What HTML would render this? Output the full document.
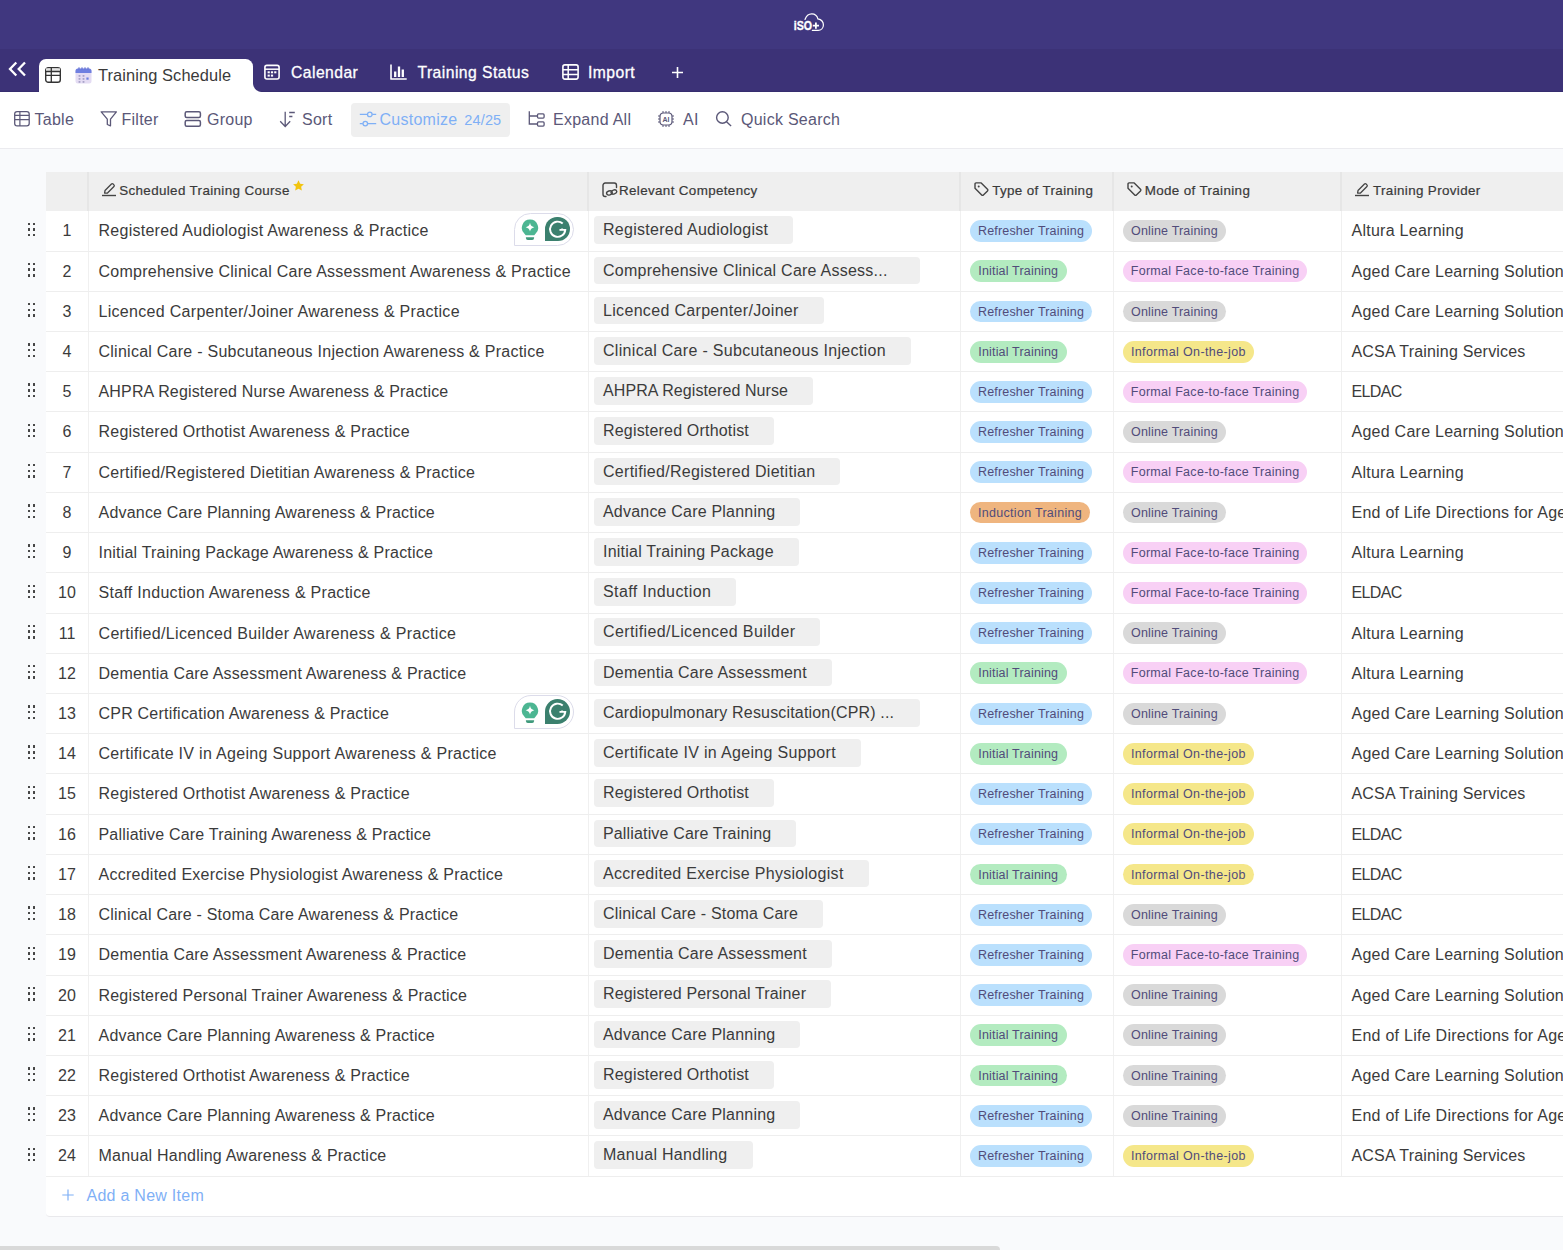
<!DOCTYPE html>
<html lang="en"><head><meta charset="utf-8"><title>Training Schedule</title>
<style>
*{box-sizing:border-box}
html,body{margin:0;padding:0}
body{width:1563px;height:1250px;overflow:hidden;background:#f9fafc;font-family:"Liberation Sans",Arial,sans-serif;font-size:16px;letter-spacing:.26px;color:#3b3b3b;position:relative}
.abs{position:absolute}
.topbar{position:absolute;left:0;top:0;width:1563px;height:49px;background:#40377f}
.tabbar{position:absolute;left:0;top:49px;width:1563px;height:43px;background:#3c3277;border-bottom:1px solid #362d6f}
.toolbar{position:absolute;left:0;top:92px;width:1563px;height:57px;background:#fff;border-bottom:1px solid #ebebef}
.tab-active{position:absolute;left:39px;top:59px;width:214px;height:33px;background:#fff;border-radius:7px 7.500px 0 0}
.tab-active:after{content:"";position:absolute;right:-9px;bottom:0;width:9px;height:9px;background:radial-gradient(circle at 100% 0,rgba(255,255,255,0) 8.5px,#fff 9.5px)}
.tt{position:absolute;white-space:nowrap;line-height:20px}
.wt{color:#fff;-webkit-text-stroke:.3px #fff;letter-spacing:.45px}
.tool{color:#5b5878}
.blue{color:#7fb0f6}
.custom{position:absolute;left:351px;top:103px;width:159px;height:34px;background:#efefef;border-radius:4px}
svg{display:block}
.ic{position:absolute}
/* table */
.thead{position:absolute;left:46px;top:171.500px;width:1530px;height:39.300px;background:#efefef}
.thead .sep{position:absolute;top:0;width:2px;height:39.300px;background:#e6e6e6;margin-left:-.5px}
.th{position:absolute;top:0;height:39.300px;line-height:38px;font-size:13.400px;letter-spacing:.36px;color:#3a3a3a;-webkit-text-stroke:.2px #3a3a3a;white-space:nowrap}
.tbody{position:absolute;left:0;top:211.400px;width:1600px}
.row{position:relative;height:40.220px;margin-left:46px;background:#fff;border-bottom:1px solid #eee;white-space:nowrap}
.drag{position:absolute;left:-18.500px;top:11.200px;width:8px;height:15px}
.drag i{position:absolute;width:2.400px;height:2.400px;background:#444;border-radius:.3px}
.drag i:nth-child(1){left:0;top:0}.drag i:nth-child(2){left:5.300px;top:0}
.drag i:nth-child(3){left:0;top:5.700px}.drag i:nth-child(4){left:5.300px;top:5.700px}
.drag i:nth-child(5){left:0;top:11.400px}.drag i:nth-child(6){left:5.300px;top:11.400px}
.c{position:absolute;top:0;height:39.200px;line-height:39.400px;border-left:1px solid #f0f0f0;overflow:hidden}
.c0{left:0;width:42px;text-align:center;border-left:none;letter-spacing:0}
.c1{left:42px;width:500px;padding-left:9.500px}
.c2{left:542px;width:372px}
.c3{left:914px;width:153px}
.c4{left:1067px;width:228px}
.c5{left:1295px;width:300px;padding-left:9.500px}
.tx{position:relative;top:0}
.chip{position:absolute;left:4.600px;top:4.900px;height:27.700px;line-height:28.400px;background:#efefef;border-radius:4px;padding:0 25px 0 9.400px}
.chip.max{width:326px;padding-right:0}
.tag{position:absolute;left:9px;top:8.700px;height:21.800px;line-height:23.600px;border-radius:11px;font-size:12.500px;letter-spacing:.18px;color:#514c7a;text-align:center}
.tr{background:#bae0fd;width:122px}
.ti{background:#b3ebc0;width:96.500px}
.td{letter-spacing:.3px;background:#efb57f;width:120px}
.to{background:#d9d9d9;width:103px;left:8.900px}
.tf{letter-spacing:.3px;background:#f8d0f5;width:184.500px;left:8.900px}
.tj{letter-spacing:.38px;background:#f5e78a;width:131px;left:8.900px}
.gram{position:absolute;left:424.600px;top:1.300px;width:60px;height:33.300px;border:1.300px solid #dcdcea;border-radius:17px 17px 17px 0;background:#fff}
.gram .bulb{position:absolute;left:6.700px;top:5.700px}
.gram .gg{position:absolute;left:30.100px;top:3.100px;width:25.300px;height:24.400px;border-radius:12.600px 12.600px 12.600px 0;background:#3b806e}
.addrow{position:absolute;left:46px;top:1177px;width:1530px;height:40px;border-radius:0 0 0 4px;background:#fff;border-bottom:1px solid #e9e9ec;color:#7fb0f6;line-height:39px}
.scroll{position:absolute;left:0;top:1246px;width:1000px;height:6px;background:#d9d9d9;border-radius:0 4px 0 0}
</style></head>
<body>
<div class="topbar">
<svg class="ic" style="left:790px;top:10px" width="40" height="24" viewBox="0 0 40 24"><text x="3.800" y="20.300" font-family="Liberation Sans,Arial,sans-serif" font-weight="bold" font-size="13.500" fill="#fff" stroke="#fff" stroke-width=".35" textLength="18.300" lengthAdjust="spacingAndGlyphs" letter-spacing="0">iSO</text><path d="M15 9.500c1.200-3.700 3.600-5.700 6.800-5.700 3.400 0 5.400 2.300 6.100 5.100 3 .6 5.500 2.900 5.500 6.100 0 3.100-2.400 5.300-5.300 5.300H22.300" fill="none" stroke="#fff" stroke-width="1.200" stroke-linecap="round"/><path d="M22.800 15.600h6.200M25.900 12.400v6.400" stroke="#fff" stroke-width="1.800" fill="none"/></svg>
</div>
<div class="tabbar"></div>
<svg class="ic" style="left:8px;top:60px" width="20" height="18" viewBox="0 0 20 18"><path d="M8.300 2.500L2 9l6.300 6.500M17 2.500L10.700 9l6.300 6.500" fill="none" stroke="#fff" stroke-width="2.300"/></svg>
<div class="tab-active"></div>
<svg class="ic" style="left:45.200px;top:67.100px" width="16" height="16" viewBox="0 0 16 16"><rect x=".7" y=".7" width="14.600" height="14.600" rx="2.600" fill="none" stroke="#333" stroke-width="1.400"/><path d="M1 1.300h14v3H1z" fill="#e4e4e4"/><path d="M1 4.500h14M1 8.400h14M6.300 1v14" stroke="#333" stroke-width="1.300" fill="none"/></svg>
<svg class="ic" style="left:75px;top:67px" width="17" height="17" viewBox="0 0 17 17"><rect x=".5" y="1.500" width="16" height="15" rx="2.500" fill="#e4dcf3"/><path d="M.5 6V4a2.500 2.500 0 0 1 2.500-2.500h11A2.500 2.500 0 0 1 16.500 4v2z" fill="#6f7fe0"/><path d="M4 .3v2M7 .3v2M10 .3v2M13 .3v2" stroke="#5565cc" stroke-width="1"/><g fill="#a9a3c9"><rect x="3.600" y="8" width="1.800" height="1.800"/><rect x="7.600" y="8" width="1.800" height="1.800"/><rect x="3.600" y="11" width="1.800" height="1.800"/><rect x="7.600" y="11" width="1.800" height="1.800"/><rect x="3.600" y="14" width="1.800" height="1.800"/><rect x="7.600" y="14" width="1.800" height="1.800"/></g><rect x="11.400" y="10.500" width="2.200" height="2.200" fill="#6f7fe0"/></svg>
<div class="tt" style="left:98px;top:64.800px;font-size:16.400px;letter-spacing:.1px;color:#3a3a3a">Training Schedule</div>

<svg class="ic" style="left:264px;top:64px" width="16" height="16" viewBox="0 0 16 16"><rect x=".9" y="1.400" width="14.200" height="13.600" rx="2" fill="none" stroke="#fff" stroke-width="1.600"/><path d="M1 5.200h14" stroke="#fff" stroke-width="1.500"/><g fill="#fff"><rect x="3.600" y="7.300" width="2.200" height="2"/><rect x="6.900" y="7.300" width="2.200" height="2"/><rect x="10.200" y="7.300" width="2.200" height="2"/><rect x="3.600" y="10.600" width="2.200" height="2"/><rect x="6.900" y="10.600" width="2.200" height="2"/></g></svg>
<div class="tt wt" style="left:291px;top:62.900px;font-size:15.700px">Calendar</div>
<svg class="ic" style="left:390px;top:64px" width="17" height="16" viewBox="0 0 17 16"><path d="M1 .5v14.500M.3 15h16.400" stroke="#fff" stroke-width="1.600" fill="none"/><path d="M5.200 7.500v5.500M9 2.500v10.500M12.800 5.500v7.500" stroke="#fff" stroke-width="2.300" fill="none"/></svg>
<div class="tt wt" style="left:417.500px;top:62.900px;font-size:15.700px">Training Status</div>
<svg class="ic" style="left:561.500px;top:64px" width="17" height="16" viewBox="0 0 17 16"><rect x=".9" y=".9" width="15.200" height="14.200" rx="2" fill="none" stroke="#fff" stroke-width="1.600"/><path d="M1 5.800h15M1 10.400h15M6.200 1v14" stroke="#fff" stroke-width="1.500" fill="none"/></svg>
<div class="tt wt" style="left:588px;top:62.900px;font-size:15.700px">Import</div>
<svg class="ic" style="left:671px;top:66px" width="13" height="13" viewBox="0 0 13 13"><path d="M6.500 1v11M1 6.500h11" stroke="#fff" stroke-width="1.600"/></svg>

<div class="toolbar"></div>
<svg class="ic" style="left:14.100px;top:111px" width="16" height="16" viewBox="0 0 16 16"><rect x=".7" y=".7" width="14.500" height="14.200" rx="2.400" fill="none" stroke="#5b5878" stroke-width="1.300"/><path d="M1 4.400h14M1 8.700h14M5.900 1v14" stroke="#5b5878" stroke-width="1.200" fill="none"/></svg>
<div class="tt tool" style="left:34.500px;top:109.500px">Table</div>
<svg class="ic" style="left:100px;top:111px" width="18" height="16" viewBox="0 0 18 16"><path d="M1.200.8h15.200l-5.900 7.400v6.600l-3.200-1.300V8.200z" fill="none" stroke="#5b5878" stroke-width="1.300" stroke-linejoin="round"/></svg>
<div class="tt tool" style="left:121.500px;top:109.500px">Filter</div>
<svg class="ic" style="left:184px;top:111px" width="18" height="16" viewBox="0 0 18 16"><rect x="1.200" y=".8" width="15.200" height="5.600" rx="1.500" fill="none" stroke="#5b5878" stroke-width="1.500"/><rect x="1.200" y="9.600" width="15.200" height="5.600" rx="1.500" fill="none" stroke="#5b5878" stroke-width="1.500"/></svg>
<div class="tt tool" style="left:207px;top:109.500px">Group</div>
<svg class="ic" style="left:279px;top:110.500px" width="17" height="17" viewBox="0 0 17 17"><path d="M6.200.8v14.300M1.200 10.300l5 5.200 5-5.200M10.200 1.500h5.600M10.200 5.500h3.200" fill="none" stroke="#5b5878" stroke-width="1.300"/></svg>
<div class="tt tool" style="left:302px;top:109.500px">Sort</div>
<div class="custom"></div>
<svg class="ic" style="left:358.500px;top:110px" width="18" height="18" viewBox="0 0 18 18"><path d="M.8 4.400h8M13.200 4.400h4M.8 13.600h3M8.700 13.600h8.500" stroke="#7fb0f6" stroke-width="1.300" fill="none"/><circle cx="10.800" cy="4.400" r="2.300" fill="none" stroke="#7fb0f6" stroke-width="1.300"/><circle cx="6.300" cy="13.600" r="2.300" fill="none" stroke="#7fb0f6" stroke-width="1.300"/></svg>
<div class="tt blue" style="left:379.500px;top:109.500px">Customize</div>
<div class="tt blue" style="left:464.300px;top:109.500px;font-size:14.500px;letter-spacing:.15px">24/25</div>
<svg class="ic" style="left:528px;top:110px" width="18" height="18" viewBox="0 0 18 18"><path d="M1.300 1.300v12.700h8M1.300 6h8" fill="none" stroke="#5b5878" stroke-width="1.300"/><rect x="9.500" y="3.900" width="6.600" height="4.200" rx="1" fill="none" stroke="#5b5878" stroke-width="1.300"/><rect x="9.500" y="11.900" width="6.600" height="4.200" rx="1" fill="none" stroke="#5b5878" stroke-width="1.300"/></svg>
<div class="tt tool" style="left:553px;top:109.500px">Expand All</div>
<svg class="ic" style="left:657px;top:110px" width="18" height="18" viewBox="0 0 18 18"><rect x="3" y="3" width="12" height="12" rx="3.500" fill="none" stroke="#5b5878" stroke-width="1.200"/><path d="M6 1v2M9 1v2M12 1v2M6 15v2M9 15v2M12 15v2M1 6h2M1 9h2M1 12h2M15 6h2M15 9h2M15 12h2" stroke="#5b5878" stroke-width="1"/><text x="9" y="11.800" text-anchor="middle" font-family="Liberation Sans,Arial,sans-serif" font-size="7" font-weight="bold" fill="#5b5878" letter-spacing="0">AI</text></svg>
<div class="tt tool" style="left:683px;top:109.500px">AI</div>
<svg class="ic" style="left:714px;top:110px" width="19" height="19" viewBox="0 0 19 19"><circle cx="8.400" cy="7.500" r="5.800" fill="none" stroke="#5b5878" stroke-width="1.400"/><path d="M12.500 11.700l4.600 4.300" stroke="#5b5878" stroke-width="1.400"/></svg>
<div class="tt tool" style="left:741px;top:109.500px">Quick Search</div>

<div class="thead">
<div class="sep" style="left:41.500px"></div><div class="sep" style="left:541.500px"></div><div class="sep" style="left:913.500px"></div><div class="sep" style="left:1066.500px"></div><div class="sep" style="left:1294.500px"></div>
<svg class="ic" style="left:56.200px;top:9.700px" width="14" height="16" viewBox="0 0 14 16"><path d="M1.800 11.300l.5-2.800L9.300 1.500a1.300 1.300 0 0 1 1.800 0l.9.900a1.300 1.300 0 0 1 0 1.800L5 11.200z" fill="none" stroke="#444" stroke-width="1.400" stroke-linejoin="round" transform="translate(.9,1.700) scale(.92)"/><path d="M0 14.500h14" stroke="#444" stroke-width="1.400"/></svg>
<div class="th" style="left:73.200px">Scheduled Training Course</div>
<svg class="ic" style="left:247.300px;top:8.700px" width="11" height="11" viewBox="0 0 10 10"><path d="M5 .2l1.500 3.100 3.400.45-2.500 2.350.65 3.400L5 7.850 1.950 9.500l.65-3.400L.1 3.750l3.400-.45z" fill="#f2c40f"/></svg>
<svg class="ic" style="left:555.800px;top:10.400px" width="16" height="16" viewBox="0 0 16 16"><path d="M4 14.500H3.200A2.200 2.200 0 0 1 1 12.300V3.200A2.200 2.200 0 0 1 3.200 1h9.100a2.200 2.200 0 0 1 2.200 2.200V5.500" fill="none" stroke="#444" stroke-width="1.400" stroke-linecap="round"/><ellipse cx="7.400" cy="10.900" rx="2.900" ry="2" transform="rotate(-18 7.400 10.900)" fill="none" stroke="#444" stroke-width="1.400"/><ellipse cx="11.900" cy="10" rx="2.900" ry="2" transform="rotate(-18 11.900 10)" fill="none" stroke="#444" stroke-width="1.400"/></svg>
<div class="th" style="left:573px">Relevant Competency</div>
<svg class="ic" style="left:927.800px;top:10.200px" width="15" height="15" viewBox="0 0 15 15"><path d="M1 1.900a1 1 0 0 1 1-1h5.200l6.300 6.300a1.200 1.200 0 0 1 0 1.700l-4.100 4.100a1.200 1.200 0 0 1-1.700 0L1 6.300z" fill="none" stroke="#444" stroke-width="1.400" stroke-linejoin="round"/><circle cx="4.700" cy="4.600" r="1" fill="#444"/></svg>
<div class="th" style="left:946.200px">Type of Training</div>
<svg class="ic" style="left:1080.900px;top:10.200px" width="15" height="15" viewBox="0 0 15 15"><path d="M1 1.900a1 1 0 0 1 1-1h5.200l6.300 6.300a1.200 1.200 0 0 1 0 1.700l-4.100 4.100a1.200 1.200 0 0 1-1.700 0L1 6.300z" fill="none" stroke="#444" stroke-width="1.400" stroke-linejoin="round"/><circle cx="4.700" cy="4.600" r="1" fill="#444"/></svg>
<div class="th" style="left:1098.700px">Mode of Training</div>
<svg class="ic" style="left:1309px;top:9.700px" width="14" height="16" viewBox="0 0 14 16"><path d="M1.800 11.300l.5-2.800L9.300 1.500a1.300 1.300 0 0 1 1.800 0l.9.900a1.300 1.300 0 0 1 0 1.800L5 11.200z" fill="none" stroke="#444" stroke-width="1.400" stroke-linejoin="round" transform="translate(.9,1.700) scale(.92)"/><path d="M0 14.500h14" stroke="#444" stroke-width="1.400"/></svg>
<div class="th" style="left:1327px">Training Provider</div>
</div>
<div class="tbody">
<div class="row"><span class="drag"><i></i><i></i><i></i><i></i><i></i><i></i></span><div class="c c0">1</div><div class="c c1"><span class="tx" style="letter-spacing:0.262px">Registered Audiologist Awareness &amp; Practice</span><span class="gram"><svg class="bulb" viewBox="0 0 18 22" width="18" height="22"><path d="M9 0.6a8.2 8.2 0 0 0-5.3 14.4c.5.5.8.9 1 1.3h8.6c.2-.4.5-.8 1-1.3A8.2 8.2 0 0 0 9 0.600z" fill="#4cb692"/><path d="M4.9 18.300h8.2v.6a2 2 0 0 1-2 2H6.900a2 2 0 0 1-2-2z" fill="#3f9a7c"/><path d="M9 3.800c.5 2.500 1.600 3.700 4.300 4.400-2.700.7-3.800 1.900-4.300 4.400-.5-2.500-1.600-3.700-4.300-4.400 2.700-.7 3.800-1.900 4.300-4.400z" fill="#fff"/></svg><span class="gg"><svg viewBox="0 0 25 25" width="25.300" height="24.400"><path d="M17.700 6.700A7.800 7.800 0 1 0 20.300 13.200H14.400" fill="none" stroke="#fff" stroke-width="2"/><path d="M14.400 14.200l2-2.500h2z" fill="#fff"/></svg></span></span></div><div class="c c2"><span class="chip" style="letter-spacing:0.274px">Registered Audiologist</span></div><div class="c c3"><span class="tag tr">Refresher Training</span></div><div class="c c4"><span class="tag to">Online Training</span></div><div class="c c5"><span class="tx">Altura Learning</span></div></div>
<div class="row"><span class="drag"><i></i><i></i><i></i><i></i><i></i><i></i></span><div class="c c0">2</div><div class="c c1"><span class="tx" style="letter-spacing:0.248px">Comprehensive Clinical Care Assessment Awareness &amp; Practice</span></div><div class="c c2"><span class="chip max" style="letter-spacing:0.243px">Comprehensive Clinical Care Assess...</span></div><div class="c c3"><span class="tag ti">Initial Training</span></div><div class="c c4"><span class="tag tf">Formal Face-to-face Training</span></div><div class="c c5"><span class="tx">Aged Care Learning Solutions</span></div></div>
<div class="row"><span class="drag"><i></i><i></i><i></i><i></i><i></i><i></i></span><div class="c c0">3</div><div class="c c1"><span class="tx" style="letter-spacing:0.302px">Licenced Carpenter/Joiner Awareness &amp; Practice</span></div><div class="c c2"><span class="chip" style="letter-spacing:0.323px">Licenced Carpenter/Joiner</span></div><div class="c c3"><span class="tag tr">Refresher Training</span></div><div class="c c4"><span class="tag to">Online Training</span></div><div class="c c5"><span class="tx">Aged Care Learning Solutions</span></div></div>
<div class="row"><span class="drag"><i></i><i></i><i></i><i></i><i></i><i></i></span><div class="c c0">4</div><div class="c c1"><span class="tx" style="letter-spacing:0.255px">Clinical Care - Subcutaneous Injection Awareness &amp; Practice</span></div><div class="c c2"><span class="chip" style="letter-spacing:0.306px">Clinical Care - Subcutaneous Injection</span></div><div class="c c3"><span class="tag ti">Initial Training</span></div><div class="c c4"><span class="tag tj">Informal On-the-job</span></div><div class="c c5"><span class="tx" style="letter-spacing:.19px">ACSA Training Services</span></div></div>
<div class="row"><span class="drag"><i></i><i></i><i></i><i></i><i></i><i></i></span><div class="c c0">5</div><div class="c c1"><span class="tx" style="letter-spacing:0.16px">AHPRA Registered Nurse Awareness &amp; Practice</span></div><div class="c c2"><span class="chip" style="letter-spacing:0.084px">AHPRA Registered Nurse</span></div><div class="c c3"><span class="tag tr">Refresher Training</span></div><div class="c c4"><span class="tag tf">Formal Face-to-face Training</span></div><div class="c c5"><span class="tx" style="letter-spacing:-.65px">ELDAC</span></div></div>
<div class="row"><span class="drag"><i></i><i></i><i></i><i></i><i></i><i></i></span><div class="c c0">6</div><div class="c c1"><span class="tx" style="letter-spacing:0.227px">Registered Orthotist Awareness &amp; Practice</span></div><div class="c c2"><span class="chip" style="letter-spacing:0.186px">Registered Orthotist</span></div><div class="c c3"><span class="tag tr">Refresher Training</span></div><div class="c c4"><span class="tag to">Online Training</span></div><div class="c c5"><span class="tx">Aged Care Learning Solutions</span></div></div>
<div class="row"><span class="drag"><i></i><i></i><i></i><i></i><i></i><i></i></span><div class="c c0">7</div><div class="c c1"><span class="tx" style="letter-spacing:0.26px">Certified/Registered Dietitian Awareness &amp; Practice</span></div><div class="c c2"><span class="chip" style="letter-spacing:0.291px">Certified/Registered Dietitian</span></div><div class="c c3"><span class="tag tr">Refresher Training</span></div><div class="c c4"><span class="tag tf">Formal Face-to-face Training</span></div><div class="c c5"><span class="tx">Altura Learning</span></div></div>
<div class="row"><span class="drag"><i></i><i></i><i></i><i></i><i></i><i></i></span><div class="c c0">8</div><div class="c c1"><span class="tx" style="letter-spacing:0.204px">Advance Care Planning Awareness &amp; Practice</span></div><div class="c c2"><span class="chip" style="letter-spacing:0.205px">Advance Care Planning</span></div><div class="c c3"><span class="tag td">Induction Training</span></div><div class="c c4"><span class="tag to">Online Training</span></div><div class="c c5"><span class="tx">End of Life Directions for Aged Care</span></div></div>
<div class="row"><span class="drag"><i></i><i></i><i></i><i></i><i></i><i></i></span><div class="c c0">9</div><div class="c c1"><span class="tx" style="letter-spacing:0.208px">Initial Training Package Awareness &amp; Practice</span></div><div class="c c2"><span class="chip" style="letter-spacing:0.225px">Initial Training Package</span></div><div class="c c3"><span class="tag tr">Refresher Training</span></div><div class="c c4"><span class="tag tf">Formal Face-to-face Training</span></div><div class="c c5"><span class="tx">Altura Learning</span></div></div>
<div class="row"><span class="drag"><i></i><i></i><i></i><i></i><i></i><i></i></span><div class="c c0">10</div><div class="c c1"><span class="tx" style="letter-spacing:0.289px">Staff Induction Awareness &amp; Practice</span></div><div class="c c2"><span class="chip" style="letter-spacing:0.424px">Staff Induction</span></div><div class="c c3"><span class="tag tr">Refresher Training</span></div><div class="c c4"><span class="tag tf">Formal Face-to-face Training</span></div><div class="c c5"><span class="tx" style="letter-spacing:-.65px">ELDAC</span></div></div>
<div class="row"><span class="drag"><i></i><i></i><i></i><i></i><i></i><i></i></span><div class="c c0">11</div><div class="c c1"><span class="tx" style="letter-spacing:0.332px">Certified/Licenced Builder Awareness &amp; Practice</span></div><div class="c c2"><span class="chip" style="letter-spacing:0.388px">Certified/Licenced Builder</span></div><div class="c c3"><span class="tag tr">Refresher Training</span></div><div class="c c4"><span class="tag to">Online Training</span></div><div class="c c5"><span class="tx">Altura Learning</span></div></div>
<div class="row"><span class="drag"><i></i><i></i><i></i><i></i><i></i><i></i></span><div class="c c0">12</div><div class="c c1"><span class="tx" style="letter-spacing:0.219px">Dementia Care Assessment Awareness &amp; Practice</span></div><div class="c c2"><span class="chip" style="letter-spacing:0.234px">Dementia Care Assessment</span></div><div class="c c3"><span class="tag ti">Initial Training</span></div><div class="c c4"><span class="tag tf">Formal Face-to-face Training</span></div><div class="c c5"><span class="tx">Altura Learning</span></div></div>
<div class="row"><span class="drag"><i></i><i></i><i></i><i></i><i></i><i></i></span><div class="c c0">13</div><div class="c c1"><span class="tx" style="letter-spacing:0.217px">CPR Certification Awareness &amp; Practice</span><span class="gram"><svg class="bulb" viewBox="0 0 18 22" width="18" height="22"><path d="M9 0.6a8.2 8.2 0 0 0-5.3 14.4c.5.5.8.9 1 1.3h8.6c.2-.4.5-.8 1-1.3A8.2 8.2 0 0 0 9 0.600z" fill="#4cb692"/><path d="M4.9 18.300h8.2v.6a2 2 0 0 1-2 2H6.900a2 2 0 0 1-2-2z" fill="#3f9a7c"/><path d="M9 3.800c.5 2.500 1.600 3.700 4.300 4.400-2.700.7-3.800 1.900-4.300 4.400-.5-2.500-1.600-3.700-4.300-4.400 2.700-.7 3.800-1.900 4.300-4.400z" fill="#fff"/></svg><span class="gg"><svg viewBox="0 0 25 25" width="25.300" height="24.400"><path d="M17.700 6.700A7.800 7.800 0 1 0 20.300 13.200H14.400" fill="none" stroke="#fff" stroke-width="2"/><path d="M14.400 14.200l2-2.500h2z" fill="#fff"/></svg></span></span></div><div class="c c2"><span class="chip max" style="letter-spacing:0.176px">Cardiopulmonary Resuscitation(CPR) ...</span></div><div class="c c3"><span class="tag tr">Refresher Training</span></div><div class="c c4"><span class="tag to">Online Training</span></div><div class="c c5"><span class="tx">Aged Care Learning Solutions</span></div></div>
<div class="row"><span class="drag"><i></i><i></i><i></i><i></i><i></i><i></i></span><div class="c c0">14</div><div class="c c1"><span class="tx" style="letter-spacing:0.304px">Certificate IV in Ageing Support Awareness &amp; Practice</span></div><div class="c c2"><span class="chip" style="letter-spacing:0.331px">Certificate IV in Ageing Support</span></div><div class="c c3"><span class="tag ti">Initial Training</span></div><div class="c c4"><span class="tag tj">Informal On-the-job</span></div><div class="c c5"><span class="tx">Aged Care Learning Solutions</span></div></div>
<div class="row"><span class="drag"><i></i><i></i><i></i><i></i><i></i><i></i></span><div class="c c0">15</div><div class="c c1"><span class="tx" style="letter-spacing:0.227px">Registered Orthotist Awareness &amp; Practice</span></div><div class="c c2"><span class="chip" style="letter-spacing:0.186px">Registered Orthotist</span></div><div class="c c3"><span class="tag tr">Refresher Training</span></div><div class="c c4"><span class="tag tj">Informal On-the-job</span></div><div class="c c5"><span class="tx" style="letter-spacing:.19px">ACSA Training Services</span></div></div>
<div class="row"><span class="drag"><i></i><i></i><i></i><i></i><i></i><i></i></span><div class="c c0">16</div><div class="c c1"><span class="tx" style="letter-spacing:0.185px">Palliative Care Training Awareness &amp; Practice</span></div><div class="c c2"><span class="chip" style="letter-spacing:0.156px">Palliative Care Training</span></div><div class="c c3"><span class="tag tr">Refresher Training</span></div><div class="c c4"><span class="tag tj">Informal On-the-job</span></div><div class="c c5"><span class="tx" style="letter-spacing:-.65px">ELDAC</span></div></div>
<div class="row"><span class="drag"><i></i><i></i><i></i><i></i><i></i><i></i></span><div class="c c0">17</div><div class="c c1"><span class="tx" style="letter-spacing:0.258px">Accredited Exercise Physiologist Awareness &amp; Practice</span></div><div class="c c2"><span class="chip" style="letter-spacing:0.295px">Accredited Exercise Physiologist</span></div><div class="c c3"><span class="tag ti">Initial Training</span></div><div class="c c4"><span class="tag tj">Informal On-the-job</span></div><div class="c c5"><span class="tx" style="letter-spacing:-.65px">ELDAC</span></div></div>
<div class="row"><span class="drag"><i></i><i></i><i></i><i></i><i></i><i></i></span><div class="c c0">18</div><div class="c c1"><span class="tx" style="letter-spacing:0.208px">Clinical Care - Stoma Care Awareness &amp; Practice</span></div><div class="c c2"><span class="chip" style="letter-spacing:0.188px">Clinical Care - Stoma Care</span></div><div class="c c3"><span class="tag tr">Refresher Training</span></div><div class="c c4"><span class="tag to">Online Training</span></div><div class="c c5"><span class="tx" style="letter-spacing:-.65px">ELDAC</span></div></div>
<div class="row"><span class="drag"><i></i><i></i><i></i><i></i><i></i><i></i></span><div class="c c0">19</div><div class="c c1"><span class="tx" style="letter-spacing:0.219px">Dementia Care Assessment Awareness &amp; Practice</span></div><div class="c c2"><span class="chip" style="letter-spacing:0.234px">Dementia Care Assessment</span></div><div class="c c3"><span class="tag tr">Refresher Training</span></div><div class="c c4"><span class="tag tf">Formal Face-to-face Training</span></div><div class="c c5"><span class="tx">Aged Care Learning Solutions</span></div></div>
<div class="row"><span class="drag"><i></i><i></i><i></i><i></i><i></i><i></i></span><div class="c c0">20</div><div class="c c1"><span class="tx" style="letter-spacing:0.2px">Registered Personal Trainer Awareness &amp; Practice</span></div><div class="c c2"><span class="chip" style="letter-spacing:0.145px">Registered Personal Trainer</span></div><div class="c c3"><span class="tag tr">Refresher Training</span></div><div class="c c4"><span class="tag to">Online Training</span></div><div class="c c5"><span class="tx">Aged Care Learning Solutions</span></div></div>
<div class="row"><span class="drag"><i></i><i></i><i></i><i></i><i></i><i></i></span><div class="c c0">21</div><div class="c c1"><span class="tx" style="letter-spacing:0.204px">Advance Care Planning Awareness &amp; Practice</span></div><div class="c c2"><span class="chip" style="letter-spacing:0.205px">Advance Care Planning</span></div><div class="c c3"><span class="tag ti">Initial Training</span></div><div class="c c4"><span class="tag to">Online Training</span></div><div class="c c5"><span class="tx">End of Life Directions for Aged Care</span></div></div>
<div class="row"><span class="drag"><i></i><i></i><i></i><i></i><i></i><i></i></span><div class="c c0">22</div><div class="c c1"><span class="tx" style="letter-spacing:0.227px">Registered Orthotist Awareness &amp; Practice</span></div><div class="c c2"><span class="chip" style="letter-spacing:0.186px">Registered Orthotist</span></div><div class="c c3"><span class="tag ti">Initial Training</span></div><div class="c c4"><span class="tag to">Online Training</span></div><div class="c c5"><span class="tx">Aged Care Learning Solutions</span></div></div>
<div class="row"><span class="drag"><i></i><i></i><i></i><i></i><i></i><i></i></span><div class="c c0">23</div><div class="c c1"><span class="tx" style="letter-spacing:0.204px">Advance Care Planning Awareness &amp; Practice</span></div><div class="c c2"><span class="chip" style="letter-spacing:0.205px">Advance Care Planning</span></div><div class="c c3"><span class="tag tr">Refresher Training</span></div><div class="c c4"><span class="tag to">Online Training</span></div><div class="c c5"><span class="tx">End of Life Directions for Aged Care</span></div></div>
<div class="row"><span class="drag"><i></i><i></i><i></i><i></i><i></i><i></i></span><div class="c c0">24</div><div class="c c1"><span class="tx" style="letter-spacing:0.226px">Manual Handling Awareness &amp; Practice</span></div><div class="c c2"><span class="chip" style="letter-spacing:0.296px">Manual Handling</span></div><div class="c c3"><span class="tag tr">Refresher Training</span></div><div class="c c4"><span class="tag tj">Informal On-the-job</span></div><div class="c c5"><span class="tx" style="letter-spacing:.19px">ACSA Training Services</span></div></div>
</div>
<div class="addrow"><svg class="ic" style="left:15.600px;top:12.300px" width="12" height="12" viewBox="0 0 12 12"><path d="M6 .4v11.200M.3 6h11.400" stroke="#7fb0f6" stroke-width="1.200" fill="none"/></svg><span style="position:absolute;left:40.500px;top:-1px">Add a New Item</span></div>
<div class="scroll"></div>
</body></html>
